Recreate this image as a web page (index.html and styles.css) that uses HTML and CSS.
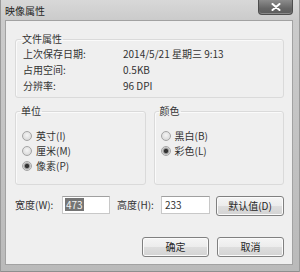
FILE: index.html
```html
<!DOCTYPE html>
<html lang="zh">
<head>
<meta charset="utf-8">
<title>映像属性</title>
<link rel="stylesheet" href="styles.css">
</head>
<body>
<div class="window">
  <div class="titlebar">
    <span class="title">映像属性</span>
    <div class="close">
      <svg width="10" height="8" viewBox="0 0 10 8"><path d="M1.5 1L8.5 7M8.5 1L1.5 7" stroke="#fff" stroke-width="2" stroke-linecap="round"/></svg>
    </div>
  </div>
  <div class="panel">
    <fieldset class="group file">
      <legend>文件属性</legend>
      <div class="info">
        <span>上次保存日期:</span><span>2014/5/21 星期三 9:13</span>
        <span>占用空间:</span><span>0.5KB</span>
        <span>分辨率:</span><span>96 DPI</span>
      </div>
    </fieldset>
    <div class="groups">
      <fieldset class="group opt">
        <legend>单位</legend>
        <label class="radio"><span class="dot"></span>英寸(I)</label>
        <label class="radio"><span class="dot"></span>厘米(M)</label>
        <label class="radio"><span class="dot on"></span>像素(P)</label>
      </fieldset>
      <fieldset class="group opt">
        <legend>颜色</legend>
        <label class="radio"><span class="dot"></span>黑白(B)</label>
        <label class="radio"><span class="dot on"></span>彩色(L)</label>
      </fieldset>
    </div>
    <div class="size-row">
      <span class="lbl w">宽度(W):</span>
      <div class="input w"><span class="sel">473</span></div>
      <span class="lbl h">高度(H):</span>
      <div class="input h"><span class="val">233</span></div>
      <button class="btn def">默认值(D)</button>
    </div>
    <div class="actions">
      <button class="btn">确定</button>
      <button class="btn">取消</button>
    </div>
  </div>
</div>
</body>
</html>
```
FILE: styles.css
```css
html, body {
  margin: 0;
  padding: 0;
}
body {
  font-family: "Noto Sans CJK SC", "Noto Sans", sans-serif;
  font-size: 10px;
  line-height: 14px;
  color: #333;
}
.window {
  width: 300px;
  height: 272px;
  box-sizing: border-box;
  padding: 0 7px 7px 5px;
  background: linear-gradient(#d8d8d8, #cbcbcb 20px, #bababa 100%);
  box-shadow: inset 1px 0 #9a9a9a, inset -1px 0 #9a9a9a, inset 0 -1px #8e8e8e;
  display: flex;
  flex-direction: column;
}
.titlebar {
  height: 20px;
  flex: none;
  display: flex;
  justify-content: space-between;
  align-items: flex-start;
}
.title {
  padding-top: 4px;
  line-height: 14px;
  color: #262626;
}
.close {
  width: 35px;
  height: 15px;
  box-sizing: border-box;
  border: 1px solid #4e4e4e;
  border-top: none;
  border-radius: 0 0 4px 4px;
  background: linear-gradient(#8c8c8c, #666 60%, #5c5c5c);
  box-shadow: inset 0 -1px #8a8a8a;
  display: flex;
  align-items: center;
  justify-content: center;
}
.close svg {
  display: block;
}
.panel {
  flex: 1;
  background: #efefef;
  border: 1px solid #a2a2a2;
  padding: 11px 8px 0 9px;
  display: flex;
  flex-direction: column;
}
.group {
  margin: 0;
  border: 1px solid #dadada;
  border-radius: 3px;
  box-shadow: inset 1px 1px #fafafa;
  min-width: 0;
}
.group legend {
  padding: 0 1px;
  margin-left: -2px;
  line-height: 14px;
}
.file {
  padding: 0 6px 3px 7px;
}
.info {
  display: grid;
  grid-template-columns: 100px auto;
  grid-auto-rows: 16px;
  line-height: 16px;
}
.groups {
  display: flex;
  gap: 8px;
  margin-top: 6px;
}
.opt {
  flex: 1;
  padding: 10px 6px 11px 6px;
}
.radio {
  display: flex;
  align-items: center;
  gap: 4px;
  height: 15px;
}
.dot {
  width: 10px;
  height: 10px;
  box-sizing: border-box;
  border-radius: 50%;
  border: 1px solid #a4a4a4;
  background: radial-gradient(circle at 50% 40%, #f4f4f4, #d2d2d2);
  flex: none;
}
.dot.on {
  background: radial-gradient(circle, #333 0 1.8px, #8e8e8e 2.4px, #e2e2e2 4px);
}
.size-row {
  display: flex;
  align-items: flex-start;
  margin-top: 11px;
  line-height: 18px;
}
.lbl.w {
  width: 47px;
}
.lbl.h {
  width: 44px;
  margin-left: 7px;
}
.input {
  height: 18px;
  box-sizing: border-box;
  border: 1px solid #c8c8c8;
  border-top-color: #a0a0a0;
  background: #fff;
  line-height: 16px;
  padding-left: 2px;
}
.input.w {
  width: 48px;
}
.input.h {
  width: 49px;
}
.sel {
  display: inline-block;
  background: #757575;
  color: #f2f2f2;
  padding: 0 1px;
  line-height: 13px;
  margin-top: 1px;
}
.val {
  padding-left: 1px;
  color: #333;
}
.btn {
  width: 68px;
  height: 20px;
  box-sizing: border-box;
  border: 1px solid #808080;
  border-radius: 3px;
  background: linear-gradient(#f5f5f5 0, #ececec 50%, #dedede 50%, #d3d3d3 100%);
  box-shadow: inset 0 0 0 1px #fbfbfb;
  font-family: inherit;
  font-size: 10px;
  line-height: 16px;
  color: #262626;
  padding: 0;
}
.btn.def {
  margin-left: 6px;
}
.actions {
  display: flex;
  justify-content: flex-end;
  gap: 8px;
  margin-top: 21px;
}
.actions .btn {
  width: 67px;
}
```
